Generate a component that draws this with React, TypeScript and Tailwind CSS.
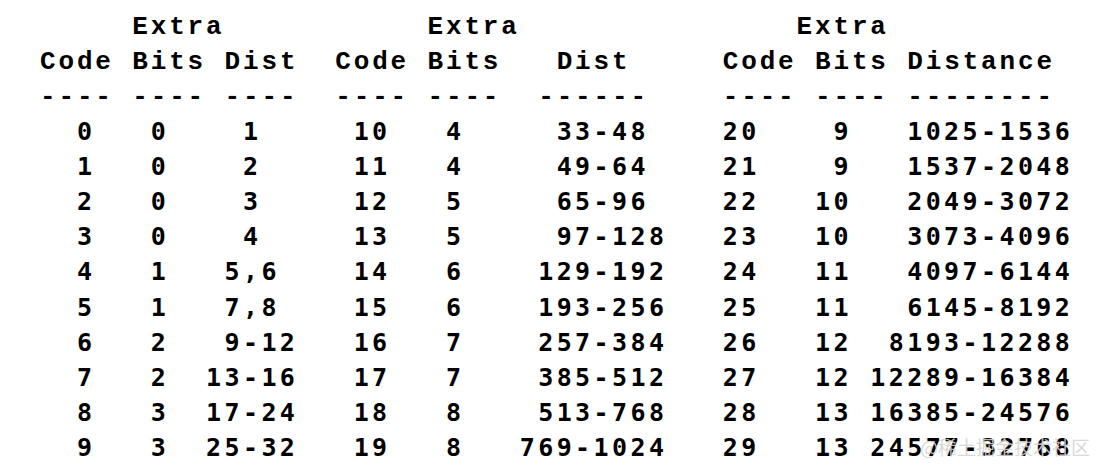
import React from 'react'

type Part = [number, string]

const WIDTH = 56

// lay text out on a fixed 56-column character grid
const line = (parts: Part[]) => {
  const chars: string[] = Array(WIDTH).fill(' ')
  parts.forEach(([col, text]) => {
    for (let i = 0; i < text.length; i++) chars[col + i] = text[i]
  })
  return chars.join('').trimEnd()
}

const headerLines = [
  line([[5, 'Extra'], [21, 'Extra'], [41, 'Extra']]),
  line([
    [0, 'Code'], [5, 'Bits'], [10, 'Dist'],
    [16, 'Code'], [21, 'Bits'], [28, 'Dist'],
    [37, 'Code'], [42, 'Bits'], [47, 'Distance'],
  ]),
  line([
    [0, '----'], [5, '----'], [10, '----'],
    [16, '----'], [21, '----'], [27, '------'],
    [37, '----'], [42, '----'], [47, '--------'],
  ]),
]

const dataRows: Part[][] = [
  [[2, '0'], [6, '0'], [11, '1'], [17, '10'], [22, '4'], [28, '33-48'], [37, '20'], [43, '9'], [47, '1025-1536']],
  [[2, '1'], [6, '0'], [11, '2'], [17, '11'], [22, '4'], [28, '49-64'], [37, '21'], [43, '9'], [47, '1537-2048']],
  [[2, '2'], [6, '0'], [11, '3'], [17, '12'], [22, '5'], [28, '65-96'], [37, '22'], [42, '10'], [47, '2049-3072']],
  [[2, '3'], [6, '0'], [11, '4'], [17, '13'], [22, '5'], [28, '97-128'], [37, '23'], [42, '10'], [47, '3073-4096']],
  [[2, '4'], [6, '1'], [10, '5,6'], [17, '14'], [22, '6'], [27, '129-192'], [37, '24'], [42, '11'], [47, '4097-6144']],
  [[2, '5'], [6, '1'], [10, '7,8'], [17, '15'], [22, '6'], [27, '193-256'], [37, '25'], [42, '11'], [47, '6145-8192']],
  [[2, '6'], [6, '2'], [10, '9-12'], [17, '16'], [22, '7'], [27, '257-384'], [37, '26'], [42, '12'], [46, '8193-12288']],
  [[2, '7'], [6, '2'], [9, '13-16'], [17, '17'], [22, '7'], [27, '385-512'], [37, '27'], [42, '12'], [45, '12289-16384']],
  [[2, '8'], [6, '3'], [9, '17-24'], [17, '18'], [22, '8'], [27, '513-768'], [37, '28'], [42, '13'], [45, '16385-24576']],
  [[2, '9'], [6, '3'], [9, '25-32'], [17, '19'], [22, '8'], [26, '769-1024'], [37, '29'], [42, '13'], [45, '24577-32768']],
]

export default function App() {
  return (
    <div className="relative w-[1098px] h-[474px] overflow-hidden bg-white pl-[40px] pt-[8px] text-black">
      <div className="pt-[2px] font-['Liberation_Mono',monospace] font-bold text-[26px] tracking-[2.85px]">
        {headerLines.map((text, i) => (
          <div key={i} className="whitespace-pre h-[35.2px] leading-[35.2px]">
            {text}
          </div>
        ))}
      </div>
      <div className="-mt-[2px] font-['DejaVu_Sans_Mono',monospace] font-bold text-[25px] tracking-[3.4px]">
        {dataRows.map((parts, i) => (
          <div key={i} className="whitespace-pre h-[35.2px] leading-[35.2px]">
            {line(parts)}
          </div>
        ))}
      </div>
      <div className="absolute left-[920px] top-[434px] font-['Noto_Sans_CJK_SC',sans-serif] text-[19px] leading-[26px] text-[#d4d4d4]/90">
        @稀土掘金技术社区
      </div>
    </div>
  )
}
